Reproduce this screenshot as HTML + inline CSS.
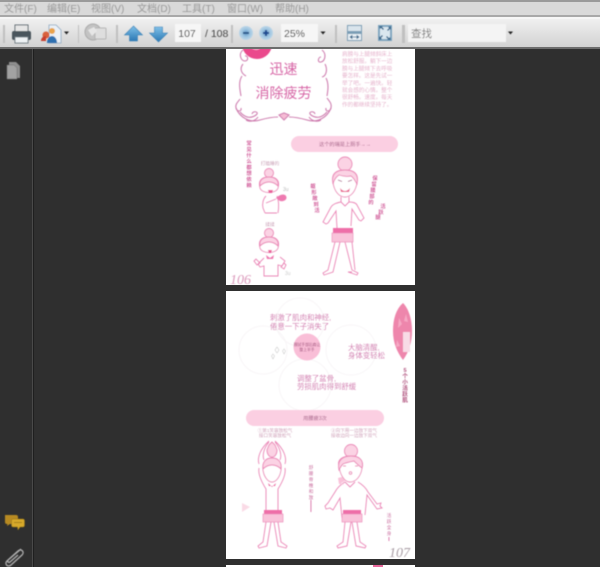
<!DOCTYPE html>
<html><head><meta charset="utf-8"><style>
html,body{margin:0;padding:0;width:600px;height:567px;overflow:hidden;background:#2f2f2f}
svg{display:block;position:absolute;left:0;top:0}
text{font-family:"Liberation Sans","Noto Sans CJK SC",sans-serif}
</style></head><body>
<svg width="600" height="567" viewBox="0 0 600 567" xmlns="http://www.w3.org/2000/svg">
<defs>
<linearGradient id="tb" x1="0" y1="0" x2="0" y2="1"><stop offset="0" stop-color="#f0f0f0"/><stop offset="1" stop-color="#d2d2d2"/></linearGradient>
<linearGradient id="blue" x1="0" y1="0" x2="0" y2="1"><stop offset="0" stop-color="#7fc0e8"/><stop offset="1" stop-color="#2a78b4"/></linearGradient>
<radialGradient id="zm"><stop offset="0" stop-color="#5e97cb"/><stop offset=".55" stop-color="#9cc4e0"/><stop offset="1" stop-color="#bdd6e8"/></radialGradient>
<filter id="s" x="-5%" y="-5%" width="110%" height="110%"><feGaussianBlur stdDeviation=".5"/></filter>
</defs>

<!-- base -->
<rect width="600" height="567" fill="#2f2f2f"/>
<rect x="32" y="48" width="1" height="519" fill="#4a4a4a"/>
<rect x="33" y="48" width="1" height="519" fill="#1f1f1f"/>

<!-- pages -->
<rect x="226" y="48" width="189" height="237" fill="#fff"/>
<rect x="226" y="291" width="189" height="268" fill="#fff"/>
<rect x="226" y="565" width="189" height="2" fill="#fff"/>
<rect x="373" y="565" width="10" height="2" fill="#e8689c"/>

<g filter="url(#s)">
<!-- PAGE 106 -->
<circle cx="257" cy="44" r="15" fill="#ea4a8c"/>
<path d="M252 48q6 4 10-3" stroke="#f7b7d2" stroke-width="1" fill="none"/>
<g fill="none" stroke="#cf7fb0" stroke-width="1.100">
<path d="M243 50c-5 4-2 11 2 11s3-6 0-5M243 64c-4 5-1 10 3 12M242 76c-4 6-2 14-1 20M240 99c-2 3-5 5-4 9s6 4 5 0"/>
<path d="M322 50c5 4 3 11-1 12s-3-5 0-5M325 64c3 6 1 12-3 13M326 78c3 6 2 12 1 18M327 98c3 4 5 6 4 10s-6 4-5 0"/>
<path d="M236 108c4 10 14 15 24 12 7-2 12-3 18-3M240 112c6 7 12 6 16 3s-3-5-4-1M246 120c5 3 10 0 12-3"/>
<path d="M331 108c-4 10-14 15-24 12-7-2-12-3-18-3M327 112c-6 7-12 6-16 3s3-5 4-1M321 120c-5 3-10 0-12-3"/>
<path d="M279 115l5-2 5 2-5 5z" fill="#f6bcd5"/>
</g>
<text x="283.500" y="74" font-size="14" fill="#d766a6" text-anchor="middle">迅速</text>
<text x="283.500" y="98" font-size="14" fill="#d766a6" text-anchor="middle">消除疲劳</text>

<g font-size="5.600" fill="#e6b3cc">
<text x="342" y="56">肩膀与上腿倾斜床上</text>
<text x="342" y="63.200">放松舒服。躺下一边</text>
<text x="342" y="70.400">膀与上腿倾下去呼吸</text>
<text x="342" y="77.600">要怎样。这是先试一</text>
<text x="342" y="84.800">举了吧。一遍快。轻</text>
<text x="342" y="92">就会感的心情。整个</text>
<text x="342" y="99.200">很舒畅。速度。每天</text>
<text x="342" y="106.400">作的都继续坚持了。</text>
</g>

<rect x="291" y="136" width="107" height="16" rx="8" fill="#fbcfe2"/>
<text x="345" y="146" font-size="5.200" fill="#a8638a" text-anchor="middle">这个的瑞是上厕手→→</text>

<!-- vertical text p106 -->
<g font-size="5.300" fill="#d2609c" text-anchor="middle" font-weight="700">
<text x="249" y="145">常</text><text x="249" y="151">见</text><text x="249" y="157">什</text><text x="249" y="163">么</text><text x="249" y="169">都</text><text x="249" y="175">想</text><text x="249" y="181">依</text><text x="249" y="187">赖</text>
</g>
<text x="270" y="165" font-size="4.600" fill="#c9a0b6" text-anchor="middle">打瞌睡的</text>
<text x="270" y="226" font-size="4.600" fill="#c9a0b6" text-anchor="middle">揉揉</text>

<!-- small figure 1 -->
<g fill="none" stroke="#ea86b6" stroke-width=".9">
<circle cx="269" cy="173" r="4.500" fill="#fbd3e4"/>
<path d="M260 188c-2-7 1-11 9-11s11 4 9 11c-2 6-16 6-18 0z" fill="#fff"/>
<path d="M260 186c-1-6 3-9 9-9s10 3 9 9c-3-3-6-4-9-4s-6 1-9 4z" fill="#fbd3e4"/>
<path d="M266 196c-3 3-4 8-3 12l2 5M277 196c2 5 2 11 1 17"/>
<path d="M266 203l10-4M265 213l12 0"/>
</g>
<path d="M276 198c3-3 8-5 10-2s-2 6-6 5z" fill="#ee7ab0"/>
<path d="M268 190h5l-1 3h-3z" fill="#e9609a"/>
<text x="283" y="191" font-size="5" fill="#bbb">3u</text>

<!-- small figure 2 -->
<g fill="none" stroke="#ea86b6" stroke-width=".9">
<circle cx="269" cy="233" r="4.500" fill="#fbd3e4"/>
<path d="M260 248c-2-7 1-11 9-11s11 4 9 11c-2 6-16 6-18 0z" fill="#fff"/>
<path d="M260 246c-1-6 3-9 9-9s10 3 9 9c-3-3-6-4-9-4s-6 1-9 4z" fill="#fbd3e4"/>
<path d="M264 258l-6 6 2 3 4-1v10h14v-11l4 1 3-5-5-4"/>
<path d="M256 259l-2 2 3 4 3-2zM284 263l2 2-2 4-3-2z"/>
</g>
<path d="M266 255l4 3 4-3-1 4h-6z" fill="#ee7ab0"/>
<path d="M268 250h4l-1 3h-2z" fill="#e9609a"/>
<text x="285" y="275" font-size="5" fill="#ccc">3u</text>

<!-- big figure -->
<g fill="none" stroke="#ea86b6" stroke-width=".9">
<circle cx="345" cy="164" r="7" fill="#fbd3e4"/>
<path d="M333 182c-2-8 3-12 12-12s14 4 12 12c-1 9-6 15-12 15s-11-6-12-15z" fill="#fff"/>
<path d="M333 184c-2-10 3-14 12-14s14 4 12 14c-2-3-3-6-6-8-5 1-9 0-12-1-3 2-5 5-6 9z" fill="#fbd3e4"/>
<path d="M338 180l4 1.500M348 181.500l4-1.500" stroke="#a85a86"/>
<path d="M341 197v5c-5 1-8 2-10 5l-8 15 3 2 2-1 8-12 1 17M349 197v5c4 0 7 1 8 3l7 13-3 3-2-1-7-11-1 17"/>
<path d="M341 202l4 4 4-4"/>
<path d="M335 242l-7 28-5 3 1 2 9-3 7-30M345 242l7 28 6 3-1 2-9-3 4 0M352 242l3 28"/>
</g>
<rect x="333" y="228" width="20" height="6" fill="#ee6ea8"/>
<rect x="332" y="233" width="21" height="9" fill="#f9c3da" stroke="#ea86b6" stroke-width=".6"/>
<path d="M340 188q5 6 10 0l-1 4h-8z" fill="#e9608f"/>

<g font-size="5.200" fill="#d2609c" text-anchor="middle" font-weight="700">
<text x="313" y="188">躯</text><text x="314" y="194">形</text><text x="315" y="200">敞</text><text x="316" y="206">到</text><text x="317" y="212">活</text>
<text x="375" y="180">保</text><text x="374" y="186">留</text><text x="373" y="192">腰</text><text x="372" y="198">部</text><text x="371" y="204">的</text>
<text x="383" y="208">活</text><text x="381" y="214">跃</text><text x="378" y="219">腿</text>
</g>
<text x="230" y="284" font-size="14" font-style="italic" fill="#dc9abc" style="font-family:'Liberation Serif',serif">106</text>

<!-- PAGE 107 -->
<g fill="none" stroke="#f8f5f7" stroke-width="1">
<circle cx="300" cy="322" r="24"/><circle cx="263" cy="350" r="24"/><circle cx="351" cy="350" r="25"/><circle cx="305" cy="385" r="26"/>
</g>
<circle cx="307" cy="347" r="13.500" fill="#f9bed7"/>
<text x="307" y="346" font-size="3.800" fill="#a0527c" text-anchor="middle">擦拭手部后肩让</text>
<text x="307" y="351" font-size="3.800" fill="#a0527c" text-anchor="middle">整上半手</text>
<g font-size="7.400" fill="#d485b4">
<text x="270" y="320">刺激了肌肉和神经,</text>
<text x="270" y="329">倦意一下子消失了</text>
<text x="348" y="350">大脑清醒,</text>
<text x="348" y="358">身体变轻松</text>
<text x="297" y="381">调整了盆骨,</text>
<text x="297" y="389">劳损肌肉得到舒缓</text>
</g>
<g fill="none" stroke="#ccc" stroke-width=".6"><path d="M277 347l2 3-2 3-2-3zM284 349l1.500 2-1.500 3-1.500-3zM273 354l1.500 2-1.500 3-1.500-3z"/></g>

<!-- leaf -->
<path d="M403 303c-7 6-10 16-10 28s4 21 10 29c6-8 9-18 9-29s-3-22-9-28z" fill="#ee86ac"/>
<path d="M399 318l3 6-4 4zM406 314l2 8-4-1zM397 340l3 6-4 1z" fill="#f6a8c4"/>
<rect x="403" y="332" width="7" height="20" fill="#f8dbe6"/>
<g font-size="5.600" fill="#b0527e" text-anchor="middle" font-weight="700">
<text x="405" y="372">5</text><text x="405" y="378">个</text><text x="405" y="384">小</text><text x="405" y="390">活</text><text x="405" y="396">跃</text><text x="405" y="402">肌</text>
</g>

<rect x="246" y="410" width="138" height="16" rx="8" fill="#fbcfe2"/>
<text x="315" y="420" font-size="5.200" fill="#a8638a" text-anchor="middle">用腰疲3次</text>
<g font-size="4.600" fill="#cfa0b8" text-anchor="middle">
<text x="275" y="432">①第1笑容放松气</text><text x="275" y="437">接口笑容放松气</text>
<text x="354" y="432">②向下用一边放下双气</text><text x="354" y="437">接收边向一边放下双气</text>
</g>

<!-- left figure p107 -->
<g fill="none" stroke="#ea86b6" stroke-width=".9">
<path d="M272 442l-3 3-2 5c0 4 2 7 5 7s5-3 5-7l-2-5z" fill="#fbd3e4"/>
<path d="M264 460c-2-5 0-12 5-18M280 460c2-5 0-12-5-18M259 464c-2-6 1-15 10-23M285 464c2-6-1-15-10-23"/>
<path d="M259 468c-1 5 2 13 7 21v21M285 468c1 5-2 13-7 21v21"/>
<path d="M263 470c-1-8 3-12 9-12s10 4 9 12c-1 7-5 12-9 12s-8-5-9-12z" fill="#fff"/>
<path d="M263 469c-1-7 3-11 9-11s10 4 9 11c-3-3-6-4-9-4s-6 1-9 4z" fill="#fbd3e4"/>
<path d="M266 522l-3 20-5 4 1 2 8-2 4-24M278 522l3 20 6 4-1 2-8-2-4-24"/>
</g>
<rect x="264" y="510" width="18" height="5" fill="#ee6ea8"/>
<rect x="263" y="514" width="20" height="8" fill="#f9c3da" stroke="#ea86b6" stroke-width=".6"/>
<path d="M268 483l4 4 4-4-1 3h-6z" fill="#e9609a"/>
<g font-size="4.600" fill="#c86a9c" text-anchor="middle">
<text x="311" y="469">舒</text><text x="311" y="475">腰</text><text x="311" y="481">脊</text><text x="311" y="487">椎</text><text x="311" y="493">和</text><text x="311" y="499">放</text>
<text x="389" y="517">活</text><text x="389" y="523">跃</text><text x="389" y="529">全</text><text x="389" y="535">身</text>
</g>
<rect x="310.500" y="500" width=".8" height="12" fill="#d2609c"/>
<rect x="388.500" y="537" width=".8" height="4" fill="#d2609c"/>
<path d="M242 503l8 4-8 5z" fill="#fadbe6"/>

<!-- right figure p107 -->
<g fill="none" stroke="#ea86b6" stroke-width=".9">
<circle cx="351" cy="451" r="6.500" fill="#fbd3e4"/>
<path d="M339 466c-2-6 3-10 12-10s13 5 11 12c-1 8-6 14-12 14s-10-8-11-16z" fill="#fff"/>
<path d="M339 470c-2-9 3-14 12-14s13 5 11 12c-3-2-6-5-8-7-5 1-9 2-11 3-2 2-3 4-4 6z" fill="#fbd3e4"/>
<path d="M345 482c-5 3-8 6-10 10l-7 11-3 3 1 3 4-1 3 2 7-12 2 20M358 482c5 3 8 6 10 10l9 12 4-1-1 3 2 2-5 1-10-14-2 20"/>
<path d="M345 482l5 5 5-5"/>
<path d="M343 466h3M355 466h3"/>
<circle cx="350.500" cy="473" r="1.300"/>
<path d="M345 522l-2 20-6 4 1 2 9-2 4-24M357 522l3 20 6 4-1 2-9-2-4-24"/>
</g>
<path d="M338 478l4-1 3 4-4 2 3 2-5-1z" fill="#f9c3da"/>
<rect x="343" y="510" width="18" height="5" fill="#ee6ea8"/>
<rect x="342" y="514" width="20" height="8" fill="#f9c3da" stroke="#ea86b6" stroke-width=".6"/>
<text x="389" y="557" font-size="14" font-style="italic" fill="#a89ca4" style="font-family:'Liberation Serif',serif">107</text>
</g>

<!-- TOOLBAR -->
<rect x="0" y="0" width="600" height="2" fill="#9a9a9a"/>
<rect x="0" y="2" width="600" height="13" fill="#d9d9d9"/>
<rect x="0" y="15" width="600" height="2" fill="#a8a8a8"/>
<rect x="0" y="17" width="600" height="2" fill="#f6f6f6"/>
<rect x="0" y="19" width="600" height="28" fill="url(#tb)"/>
<rect x="0" y="47" width="600" height="2" fill="#6c6c6c"/>

<g filter="url(#s)">
<g font-size="10" fill="#999">
<text x="4" y="12">文件(F)</text>
<text x="47" y="12">编辑(E)</text>
<text x="91" y="12">视图(V)</text>
<text x="137" y="12">文档(D)</text>
<text x="182" y="12">工具(T)</text>
<text x="227" y="12">窗口(W)</text>
<text x="275" y="12">帮助(H)</text>
</g>

<!-- separators -->
<g fill="#c0c0c0">
<rect x="3" y="25" width="2" height="18"/><rect x="78" y="25" width="1" height="18"/><rect x="116" y="25" width="2" height="18"/><rect x="231" y="25" width="2" height="18"/><rect x="335" y="25" width="2" height="18"/><rect x="402" y="25" width="3" height="18"/>
</g>

<!-- printer -->
<rect x="15" y="25" width="13" height="7" fill="#e6e6e6" stroke="#5d6a72"/>
<rect x="12" y="31" width="19" height="9" rx="2" fill="#48545c"/>
<rect x="15" y="37" width="13" height="6" fill="#eef2f4" stroke="#6d7a82"/>

<!-- document people icon -->
<path d="M49 25h7l5 5v13H49z" fill="#eaf0f6" stroke="#8aa6c0" stroke-width=".8"/>
<circle cx="46" cy="35" r="3.500" fill="#d9603a"/><circle cx="52" cy="31" r="3" fill="#e8a34c"/>
<path d="M47 43c0-5 3-7 5-7s5 2 5 7z" fill="#2e6fb0"/><path d="M41 41c0-3 2-5 5-5v5z" fill="#c83c2e"/>
<path d="M64 31.500h5l-2.500 3z" fill="#222"/>

<!-- disabled globe -->
<circle cx="93" cy="32" r="8" fill="#c3c3c3" stroke="#aaa"/>
<rect x="95" y="28" width="11" height="11" rx="1" fill="#dedede" stroke="#b5b5b5"/>
<path d="M88 30l6-3 3 4-5 5z" fill="#e6e6e6"/>

<!-- arrows -->
<path d="M133.500 26l9 9h-5v6h-8v-6h-5z" fill="url(#blue)" stroke="#3b80b5" stroke-width=".6"/>
<path d="M154.500 27h8v6h5l-9 9-9-9h5z" fill="url(#blue)" stroke="#3b80b5" stroke-width=".6"/>

<!-- page box -->
<rect x="175" y="24" width="26" height="18" fill="#f6f6f6"/>
<text x="187" y="37" font-size="10.500" fill="#333" text-anchor="middle">107</text>
<text x="205" y="37" font-size="10.500" fill="#444">/ 108</text>

<!-- zoom -->
<circle cx="246" cy="33" r="7" fill="url(#zm)"/><rect x="243" y="32" width="6" height="2" fill="#2c5a8c"/>
<circle cx="266" cy="33" r="7" fill="url(#zm)"/><rect x="263" y="32" width="6" height="2" fill="#1c4a90"/><rect x="265" y="30" width="2" height="6" fill="#1c4a90"/>
<rect x="281" y="24" width="37" height="18" fill="#f6f6f6"/>
<text x="284" y="37" font-size="10.500" fill="#333">25%</text>
<path d="M320.500 31.500h5l-2.500 3z" fill="#222"/>

<!-- fit width -->
<rect x="347" y="25" width="15" height="16" fill="#7a9db5"/>
<rect x="348" y="26" width="13" height="5" fill="#d9e4ec"/>
<rect x="348" y="34" width="13" height="6" fill="#e8eff4"/>
<path d="M350 37h9M350 37l2-1.500v3zM359 37l-2-1.500v3z" stroke="#3e6a8c" stroke-width=".7" fill="#3e6a8c"/>
<!-- fit page -->
<rect x="378" y="25" width="14" height="16" fill="#7fa5bf"/>
<rect x="380" y="27" width="10" height="12" fill="#dbe7ef"/>
<path d="M379 26l4 0-1 1 2 2-1 1-2-2-1 1zM391 26v4l-1-1-2 2-1-1 2-2-1-1zM379 40v-4l1 1 2-2 1 1-2 2 1 1zM391 40h-4l1-1-2-2 1-1 2 2 1-1z" fill="#3c6c90"/>

<!-- find -->
<rect x="408" y="24" width="98" height="18" fill="#f4f4f4"/>
<text x="411" y="37" font-size="10.500" fill="#777">查找</text>
<path d="M508 31.500h5l-2.500 3z" fill="#222"/>

<!-- left pane icons -->
<path d="M9 62h7l4 4v12H9z" fill="#8e8e8e"/>
<path d="M7 65h7l3 3v11H7z" fill="#a2a2a2" stroke="#6c6c6c" stroke-width=".5"/>
<path d="M5 515h11a2 2 0 0 1 2 2v5a2 2 0 0 1-2 2h-6l-3 2 .5-2H7a2 2 0 0 1-2-2z" fill="#b78a20"/>
<path d="M13 519h10a1.500 1.500 0 0 1 1.500 1.500v5a1.500 1.500 0 0 1-1.500 1.500h-3l-2 3-.5-3H13a1.500 1.500 0 0 1-1.500-1.500v-5A1.500 1.500 0 0 1 13 519z" fill="#d7a92a" stroke="#8f6e14" stroke-width=".5"/>
<path d="M14 522.500h8" stroke="#8f6e14" stroke-width=".7"/>
<path d="M21 549l-14 12c-3 3 1 7 4 4l11-10c3-3-1-7-4-4l-10 9c-1 2 1 3 2 2l8-7" fill="none" stroke="#b0b0b0" stroke-width="1.300"/>
</g>
</svg>
</body></html>
